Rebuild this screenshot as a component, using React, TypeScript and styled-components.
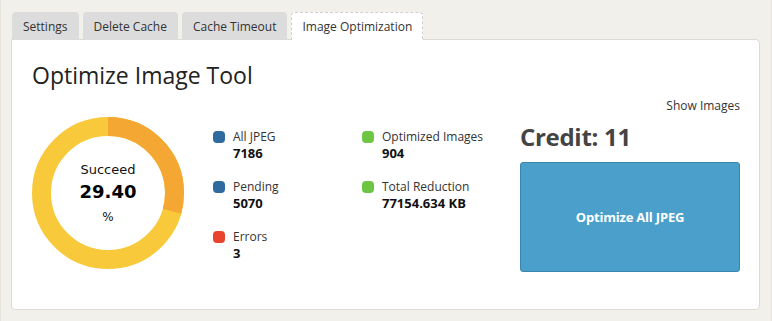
import styled, { createGlobalStyle } from 'styled-components';

const GlobalStyle = createGlobalStyle`
    html, body {
        margin: 0;
        padding: 0;
        background: #f1f0eb;
        font-family: "Open Sans", "Liberation Sans", sans-serif;
        color: #333;
    }
`;

const Page = styled.div`
    width: 772px;
    height: 321px;
    box-sizing: border-box;
    padding: 12px 11px 0 10px;
    border-left: 1px solid #e6e4dc;
    border-right: 1px solid #e6e4dc;
`;

const TabBar = styled.div`
    display: flex;
    gap: 4px;
    padding-left: 1px;
    height: 27px;
`;

const Tab = styled.div<{ active?: boolean }>`
    display: flex;
    align-items: center;
    padding: 0 10px;
    font-size: 12px;
    color: #333;
    border-radius: 4px 4px 0 0;
    background: ${({ active }) => (active ? '#ffffff' : '#dcdcdc')};
    border: ${({ active }) => (active ? '1px dashed #cfcfcf' : '1px solid #dcdcdc')};
    border-bottom: none;
    position: relative;
    z-index: 1;
    margin-bottom: -1px;
`;

const Panel = styled.div`
    background: #fff;
    border: 1px solid #dcdad2;
    border-radius: 0 4px 4px 4px;
    height: 271px;
    box-sizing: border-box;
    padding: 20px 19px 0 21px;
`;

const Title = styled.h1`
    margin: 0 0 0 -1px;
    font-size: 23px;
    font-weight: 400;
    color: #222;
    line-height: 30px;
`;

const Body = styled.div`
    display: flex;
    margin-top: 8px;
`;

const ChartBox = styled.div`
    position: relative;
    width: 152px;
    height: 152px;
    margin-top: 19px;
    margin-right: 29px;
    margin-left: -1px;
`;

const ChartCenter = styled.div`
    position: absolute;
    inset: 0;
    display: flex;
    flex-direction: column;
    align-items: center;
    justify-content: center;
    font-family: "DejaVu Sans", Verdana, sans-serif;
    color: #111;
`;

const Succeed = styled.div`
    font-size: 13px;
    line-height: 18px;
    margin-top: 2px;
`;

const Percent = styled.div`
    font-size: 18px;
    font-weight: 700;
    line-height: 26px;
    color: #000;
`;

const Unit = styled.div`
    font-size: 12px;
    line-height: 20px;
    margin-top: 2px;
`;

const Stats = styled.div`
    display: grid;
    grid-template-columns: 149px 150px;
    grid-auto-rows: 50px;
    margin-top: 30px;
`;

const Stat = styled.div`
    display: flex;
    gap: 8px;
`;

const Dot = styled.span<{ color: string }>`
    width: 12px;
    height: 12px;
    border-radius: 4px;
    background: ${({ color }) => color};
    margin-top: 3px;
    flex-shrink: 0;
`;

const StatLabel = styled.div`
    font-size: 12px;
    line-height: 17px;
    color: #333;
`;

const StatValue = styled.div`
    font-size: 13px;
    font-weight: 700;
    line-height: 17px;
    color: #111;
`;

const Side = styled.div`
    display: flex;
    flex-direction: column;
    width: 220px;
    margin-left: auto;
`;

const ShowImages = styled.div`
    align-self: flex-end;
    font-size: 12px;
    line-height: 16px;
    color: #333;
`;

const Credit = styled.div`
    font-size: 24px;
    font-weight: 700;
    color: #444;
    line-height: 30px;
    margin-top: 8px;
    letter-spacing: -0.3px;
`;

const OptimizeButton = styled.button`
    margin-top: 10px;
    height: 110px;
    background: #4aa0cb;
    border: 1px solid #3b86ae;
    border-radius: 3px;
    color: #fff;
    font-family: "Open Sans", "Liberation Sans", sans-serif;
    font-size: 13px;
    font-weight: 700;
    letter-spacing: -0.2px;
    cursor: pointer;
`;

const Donut = ({ value }: { value: number }) => {
    const r = 66.5;
    const c = 2 * Math.PI * r;
    const part = (value / 100) * c;
    return (
        <svg width="152" height="152" viewBox="0 0 152 152">
            <circle cx="76" cy="76" r={r} fill="none" stroke="#f8c93a" strokeWidth="19" />
            <circle
                cx="76"
                cy="76"
                r={r}
                fill="none"
                stroke="#f5a733"
                strokeWidth="19"
                strokeDasharray={`${part} ${c}`}
                transform="rotate(-90 76 76)"
            />
        </svg>
    );
};

const stats = [
    { label: 'All JPEG', value: '7186', color: '#2f6b9e' },
    { label: 'Optimized Images', value: '904', color: '#6cc644' },
    { label: 'Pending', value: '5070', color: '#2f6b9e' },
    { label: 'Total Reduction', value: '77154.634 KB', color: '#6cc644' },
    { label: 'Errors', value: '3', color: '#e8442e' },
];

export default function App() {
    return (
        <>
            <GlobalStyle />
            <Page>
                <TabBar>
                    <Tab>Settings</Tab>
                    <Tab>Delete Cache</Tab>
                    <Tab>Cache Timeout</Tab>
                    <Tab active>Image Optimization</Tab>
                </TabBar>
                <Panel>
                    <Title>Optimize Image Tool</Title>
                    <Body>
                        <ChartBox>
                            <Donut value={29.4} />
                            <ChartCenter>
                                <Succeed>Succeed</Succeed>
                                <Percent>29.40</Percent>
                                <Unit>%</Unit>
                            </ChartCenter>
                        </ChartBox>
                        <Stats>
                            {stats.map((s) => (
                                <Stat key={s.label}>
                                    <Dot color={s.color} />
                                    <div>
                                        <StatLabel>{s.label}</StatLabel>
                                        <StatValue>{s.value}</StatValue>
                                    </div>
                                </Stat>
                            ))}
                        </Stats>
                        <Side>
                            <ShowImages>Show Images</ShowImages>
                            <Credit>Credit: 11</Credit>
                            <OptimizeButton>Optimize All JPEG</OptimizeButton>
                        </Side>
                    </Body>
                </Panel>
            </Page>
        </>
    );
}
